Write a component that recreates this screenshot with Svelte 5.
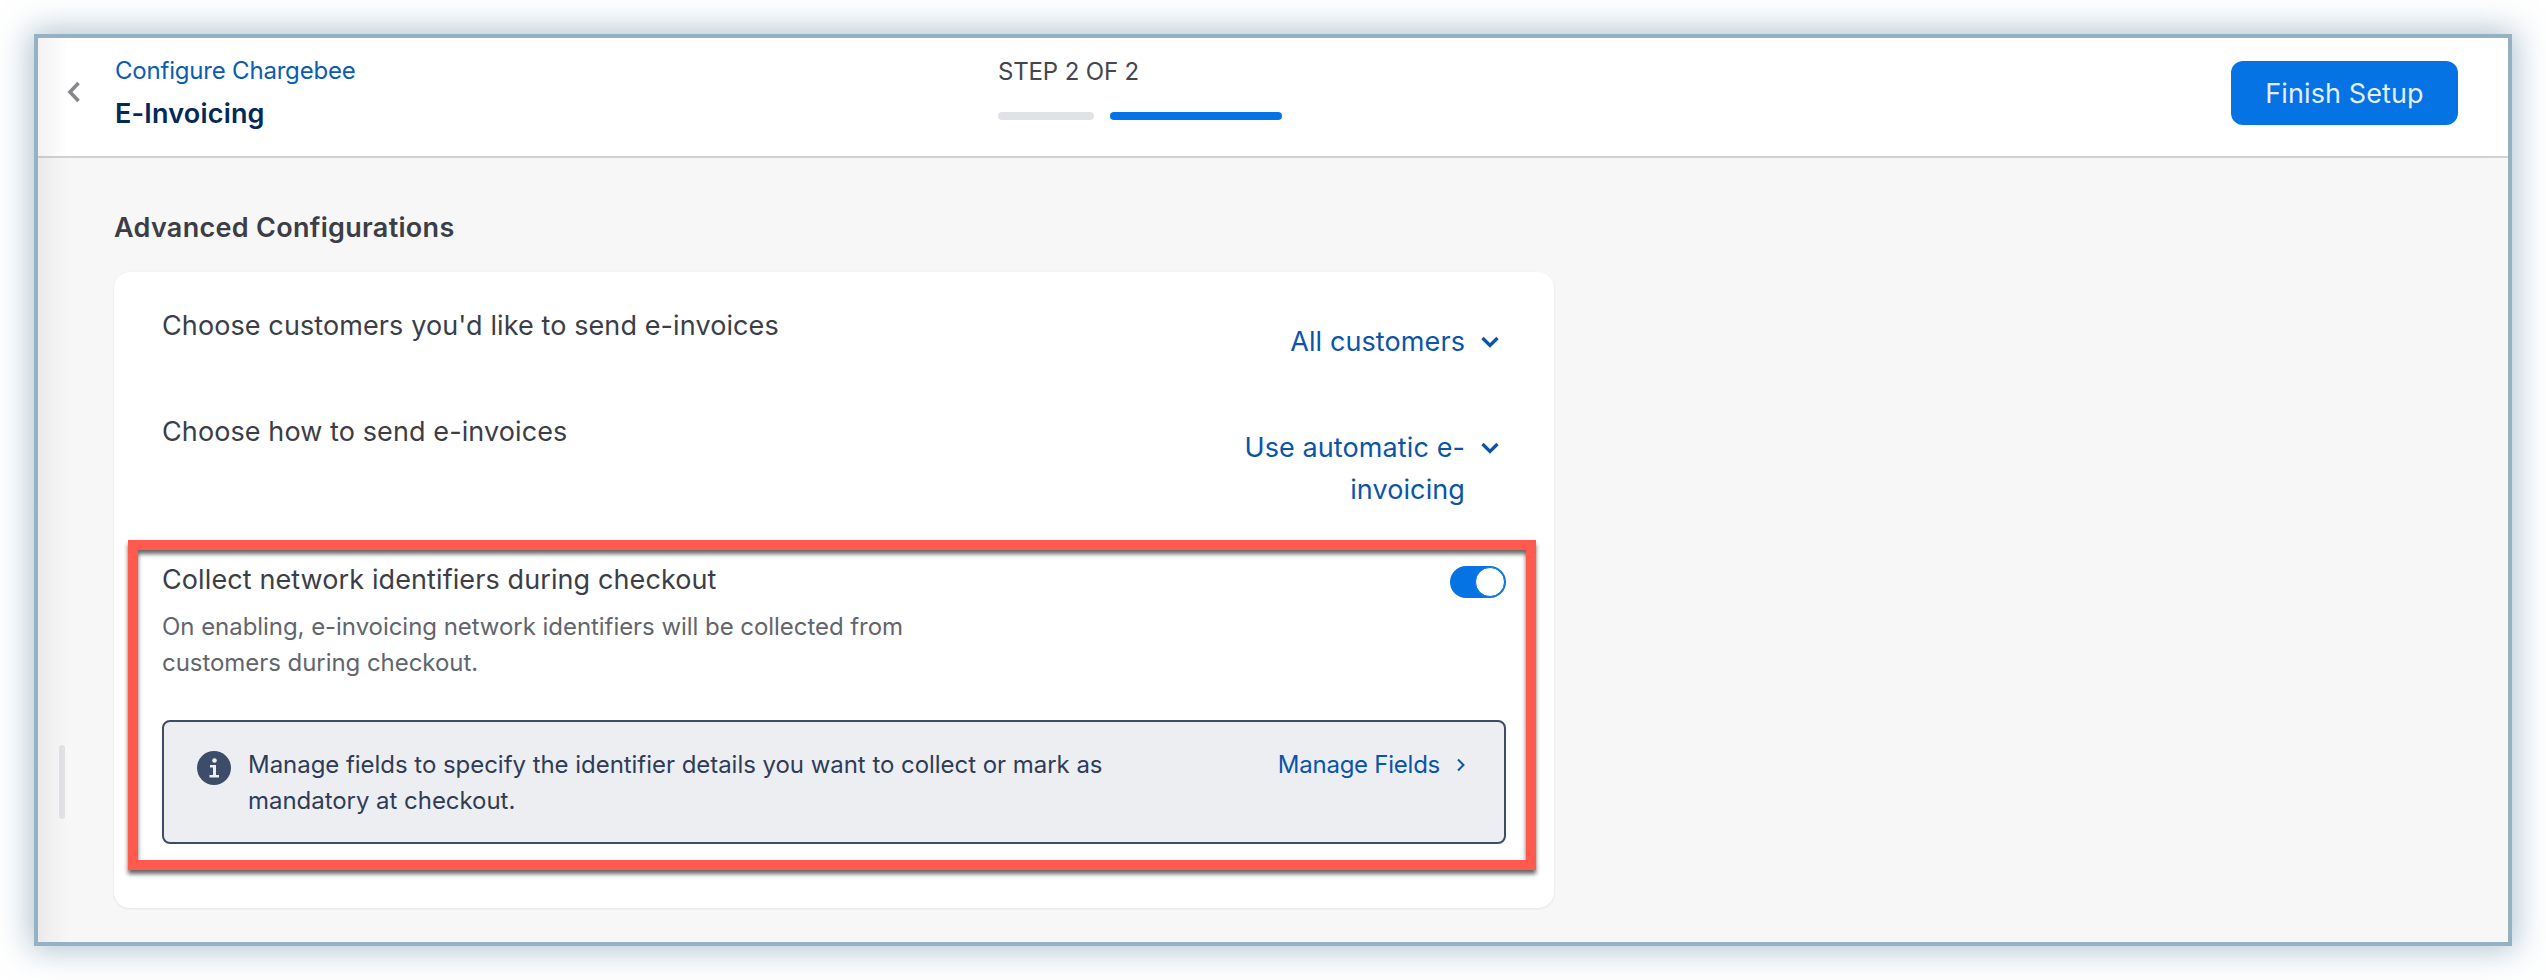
<script>
	let notify = $state(true);
</script>

<div class="page">
	<div class="frame">
		<header class="top">
			<button class="back" aria-label="Back">
				<svg width="14" height="22" viewBox="0 0 14 22"><path d="M11.5 2 3 11l8.500 9" fill="none" stroke="#85878c" stroke-width="3.600"/></svg>
			</button>
			<div class="crumbs">
				<a class="parent" href="#top">Configure Chargebee</a>
				<div class="current">E-Invoicing</div>
			</div>
			<div class="steps">
				<div class="step-label">STEP 2 OF 2</div>
				<div class="bars">
					<span class="bar done"></span>
					<span class="bar active"></span>
				</div>
			</div>
			<button class="finish">Finish Setup</button>
		</header>

		<main class="content">
			<h2>Advanced Configurations</h2>
			<section class="card">
				<div class="row first">
					<div class="label">Choose customers you'd like to send e-invoices</div>
					<div class="picker">
						<span class="picker-text">All customers</span>
						<svg width="18" height="12" viewBox="0 0 18 12"><path d="M1.500 2 9 9.500 16.500 2" fill="none" stroke="#0a55a8" stroke-width="3.300"/></svg>
					</div>
				</div>
				<div class="row second">
					<div class="label">Choose how to send e-invoices</div>
					<div class="picker">
						<span class="picker-text">Use automatic e-invoicing</span>
						<svg width="18" height="12" viewBox="0 0 18 12"><path d="M1.500 2 9 9.500 16.500 2" fill="none" stroke="#0a55a8" stroke-width="3.300"/></svg>
					</div>
				</div>
				<div class="row third">
					<div>
						<div class="label">Collect network identifiers during checkout</div>
						<p class="desc">On enabling, e-invoicing network identifiers will be collected from customers during checkout.</p>
					</div>
					<button class="toggle" class:on={notify} aria-label="Toggle" onclick={() => (notify = !notify)}><span class="knob"></span></button>
				</div>
				<div class="notice">
					<svg class="info" width="34" height="34" viewBox="0 0 34 34">
						<circle cx="17" cy="17" r="17" fill="#3d4c68"/>
						<circle cx="17.500" cy="9.500" r="2.300" fill="#edeef2"/>
						<path d="M13 14h6v10h3v2.500H12.500V24H16v-7.500h-3z" fill="#edeef2"/>
					</svg>
					<div class="notice-text">Manage fields to specify the identifier details you want to collect or mark as mandatory at checkout.</div>
					<a class="manage" href="#top">Manage Fields
						<svg width="10" height="14" viewBox="0 0 10 14"><path d="M2 1.500 7.500 7 2 12.500" fill="none" stroke="#0a55a8" stroke-width="2"/></svg>
					</a>
				</div>
				<div class="callout"></div>
			</section>
		</main>
		<span class="handle"></span>
		<div class="edge-shade"></div>
	</div>
</div>

<style>
	:global(body) { background: #fff; }
	.page {
		height: 980px;
		box-sizing: border-box;
		padding: 34px;
		overflow: hidden;
		font-family: Inter, "Liberation Sans", sans-serif;
	}
	.frame {
		position: relative;
		height: 912px;
		box-sizing: border-box;
		border: 4px solid #96b2c2;
		background: #f7f7f7;
		box-shadow: 0 0 30px 4px rgba(98, 138, 165, 0.5);
	}
	.edge-shade {
		position: absolute;
		left: 0;
		top: 0;
		bottom: 0;
		width: 30px;
		background: linear-gradient(to right, rgba(0, 0, 0, 0.05), rgba(0, 0, 0, 0));
		pointer-events: none;
	}
	.handle {
		position: absolute;
		left: 21px;
		top: 707px;
		width: 6px;
		height: 74px;
		border-radius: 3px;
		background: #e2e3e7;
	}
	.top {
		display: flex;
		align-items: flex-start;
		height: 118px;
		background: #fff;
		border-bottom: 2px solid #d2d2d2;
	}
	.back {
		margin: 43px 0 0 29px;
		padding: 0;
		border: 0;
		background: none;
		line-height: 0;
		width: 48px;
		text-align: left;
	}
	.crumbs { width: 883px; padding-top: 15px; }
	.parent {
		display: block;
		font-size: 24px;
		letter-spacing: -0.2px;
		line-height: 36px;
		color: #0a5cb4;
		text-decoration: none;
	}
	.current {
		margin-top: 7px;
		font-size: 27px;
		letter-spacing: 0.2px;
		line-height: 36px;
		font-weight: 600;
		color: #012a58;
	}
	.steps { padding-top: 16px; }
	.step-label { font-size: 24px; letter-spacing: -0.15px; line-height: 36px; color: #43464d; }
	.bars { display: flex; gap: 16px; margin-top: 22px; }
	.bar { height: 8px; border-radius: 4px; }
	.done { width: 96px; background: #e0e2e6; }
	.active { width: 172px; background: #0573e3; }
	.finish {
		margin: 23px 0 0 auto;
		margin-right: 50px;
		width: 227px;
		height: 64px;
		border: 0;
		border-radius: 12px;
		background: #0573e3;
		color: #e3eefb;
		font-family: inherit;
		font-size: 27px;
		letter-spacing: 0.1px;
	}
	.content { padding: 52px 0 0 76px; }
	h2 {
		margin: 0;
		font-size: 27px;
		letter-spacing: 0.3px;
		line-height: 36px;
		font-weight: 600;
		color: #3b3e46;
	}
	.card {
		position: relative;
		width: 1440px;
		box-sizing: border-box;
		margin-top: 26px;
		padding: 36px 48px 64px;
		border-radius: 16px;
		background: #fff;
		box-shadow: 0 1px 3px rgba(0, 0, 0, 0.08);
	}
	.row { display: flex; justify-content: space-between; align-items: flex-start; }
	.first { height: 106px; }
	.second { height: 148px; }
	.third { height: 158px; }
	.label { font-size: 27px; letter-spacing: 0.1px; line-height: 36px; color: #3b3e46; }
	.picker {
		display: flex;
		align-items: flex-start;
		gap: 16px;
		margin-top: 13px;
		margin-right: 7px;
		font-size: 27px;
		letter-spacing: 0.1px;
		line-height: 42px;
		color: #0a55a8;
	}
	.picker-text { width: 240px; text-align: right; }
	.picker svg { margin-top: 15px; }
	.desc {
		width: 780px;
		margin: 11px 0 0;
		font-size: 24px;
		letter-spacing: -0.05px;
		line-height: 36px;
		color: #62656c;
	}
	.toggle {
		position: relative;
		margin-top: 4px;
		width: 56px;
		height: 32px;
		padding: 0;
		border: 0;
		border-radius: 16px;
		background: #0573e3;
	}
	.knob {
		position: absolute;
		right: 1px;
		top: 1px;
		width: 28px;
		height: 28px;
		border-radius: 50%;
		background: #fff;
		border: 1px solid #0573e3;
	}
	.notice {
		display: flex;
		align-items: flex-start;
		box-sizing: border-box;
		height: 124px;
		padding: 25px 32px 0 33px;
		border: 2px solid #3d4c68;
		border-radius: 8px;
		background: #edeef2;
	}
	.info { flex: none; margin-top: 4px; }
	.notice-text {
		width: 900px;
		margin-left: 17px;
		font-size: 24px;
		letter-spacing: -0.04px;
		line-height: 36px;
		color: #2f3c57;
	}
	.manage {
		display: flex;
		align-items: center;
		gap: 16px;
		margin-left: auto;
		margin-right: 6px;
		font-size: 24px;
		letter-spacing: -0.25px;
		line-height: 36px;
		color: #0a55a8;
		text-decoration: none;
	}
	.callout {
		position: absolute;
		left: 14px;
		top: 268px;
		width: 1408px;
		height: 330px;
		box-sizing: border-box;
		border: 10px solid #ff5a4d;
		filter: drop-shadow(0 4px 2px rgba(0, 0, 0, 0.6));
		pointer-events: none;
	}
</style>
